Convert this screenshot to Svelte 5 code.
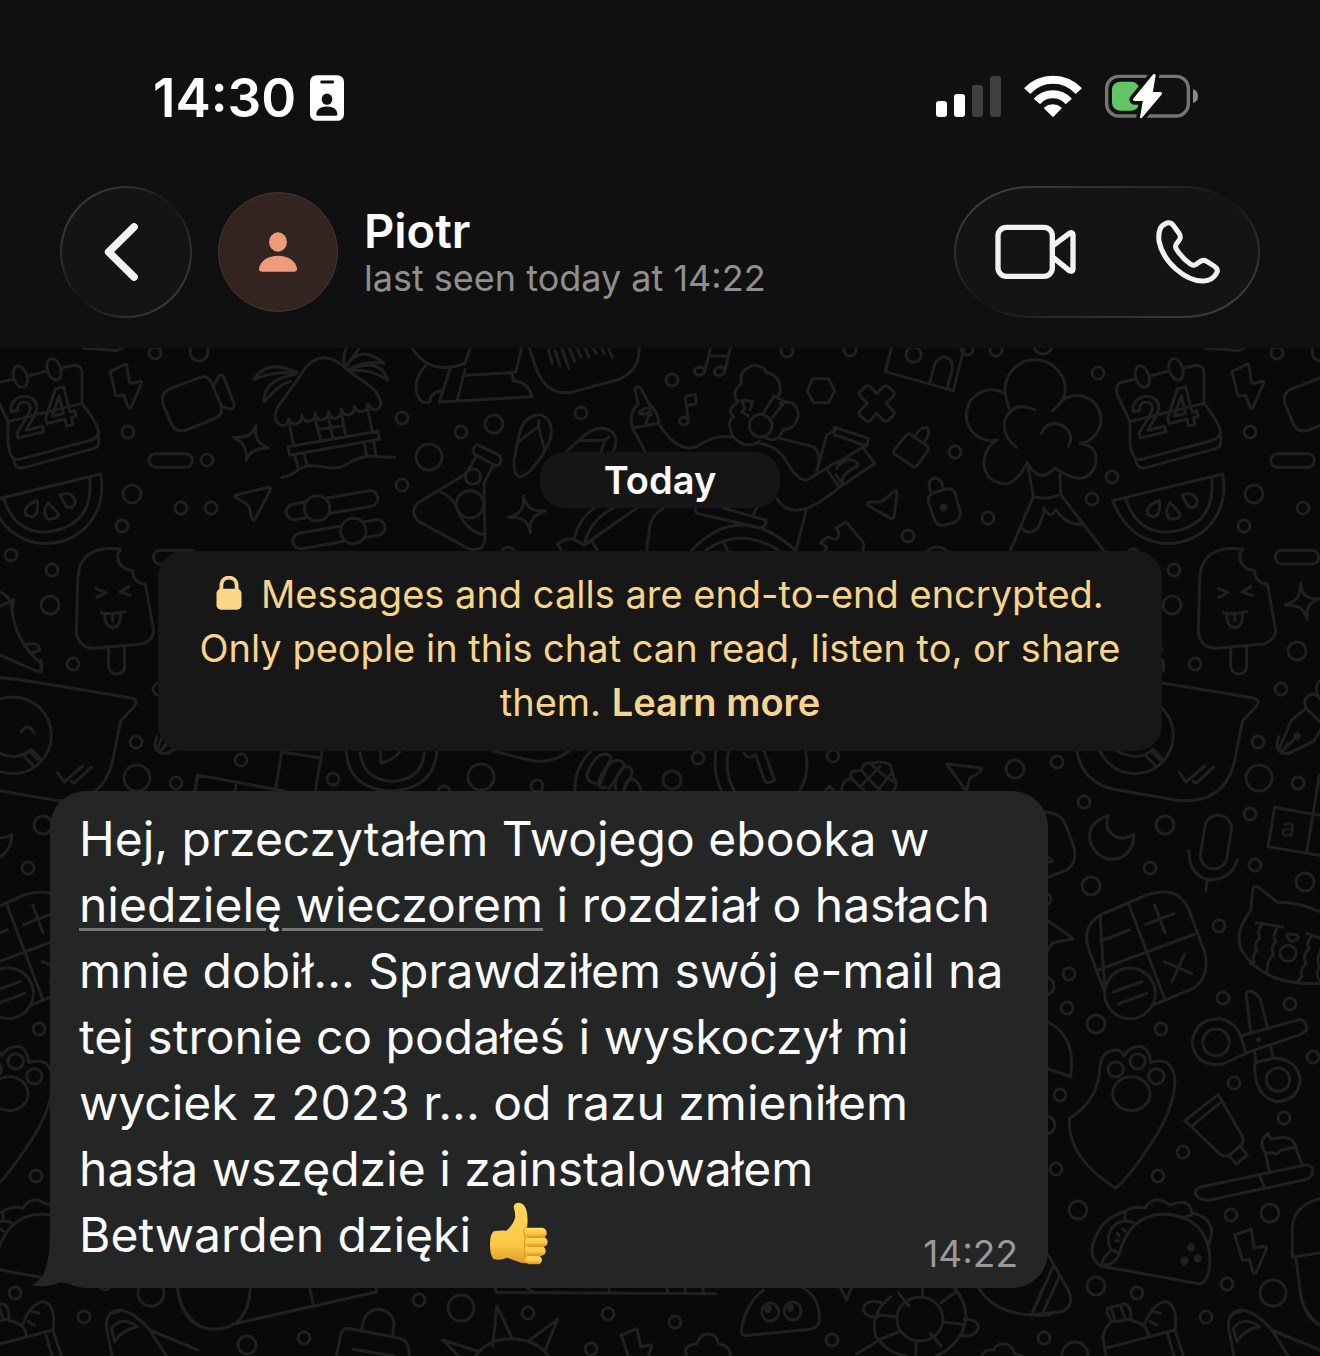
<script>
  const contact = { name: "Piotr", status: "last seen today at 14:22" };

  const small = 6;
  const medium = 9;
  const large = 13;

  // loose bubbles of the wallpaper: radius and list of centers
  const bubbles = [
    {
      r: small,
      at: [
        [155, 353], [128, 432], [207, 460], [181, 508], [211, 508], [122, 526],
        [11, 555], [52, 570], [73, 664], [402, 418], [402, 485], [461, 432],
        [581, 413], [672, 380], [787, 351], [850, 350], [508, 553], [996, 350],
        [1098, 373], [1112, 477], [955, 452], [1092, 499], [988, 518],
        [908, 536], [967, 349], [1057, 762], [1084, 802], [1150, 868],
        [1281, 689], [1258, 742], [1298, 783], [1250, 814], [1255, 865],
        [1219, 926], [1223, 998], [1290, 1004], [1069, 974], [1067, 1008],
        [1045, 899], [1161, 1029], [1060, 1095], [1056, 1169], [1183, 1152],
        [1158, 1176], [1234, 1083], [1313, 1057], [1284, 1118], [1231, 1215],
        [1227, 1284], [1137, 1293], [1206, 1317], [1044, 1338], [241, 760],
        [333, 779], [537, 786], [444, 792], [698, 758], [833, 756],
        [419, 1300], [528, 1313], [608, 1314], [675, 1322], [591, 1349],
        [304, 1338], [832, 1340],
      ],
    },
    {
      r: medium,
      at: [
        [199, 352], [132, 494], [50, 605], [494, 424], [1043, 345],
        [1297, 651], [1165, 825], [1091, 886], [1305, 882], [1045, 986],
        [1096, 1024], [1046, 1125], [1078, 1210], [1270, 1213], [1096, 1286],
        [672, 780], [1015, 769], [247, 1345],
      ],
    },
    {
      r: large,
      at: [
        [429, 457], [937, 560], [1259, 778], [1273, 1293], [1075, 1355],
        [481, 777], [461, 1308],
      ],
    },
  ];
</script>

<div class="screen">
  <header>
    <div class="status-bar">
      <div class="clock">
        <span>14:30</span>
        <svg width="34" height="46" viewBox="810 76 102 137" aria-hidden="true">
          <rect x="810" y="76" width="102" height="137" rx="20" fill="#fff" />
          <rect x="841" y="92" width="41" height="9" rx="4" fill="#101010" />
          <ellipse cx="861" cy="148" rx="16" ry="17" fill="#101010" />
          <path d="M829 193C829 179 842 170 861 170S892 179 892 193Q892 198 886 198H835Q829 198 829 193Z" fill="#101010" />
        </svg>
      </div>
      <div class="indicators">
        <svg width="65" height="41" viewBox="111 78 195 123" aria-label="Signal">
          <rect x="111" y="153" width="33" height="48" rx="9" fill="#fff" />
          <rect x="165" y="132" width="33" height="69" rx="9" fill="#fff" />
          <rect x="219" y="105" width="33" height="96" rx="9" fill="#404040" />
          <rect x="273" y="78" width="33" height="123" rx="9" fill="#404040" />
        </svg>
        <svg width="58" height="43" viewBox="374 75 174 129" aria-label="Wi-Fi">
          <g fill="#fff" stroke="#fff" stroke-width="4" stroke-linejoin="round">
            <path d="M377 115A116 116 0 0 1 545 115L529 129A92 92 0 0 0 393 129Z" />
            <path d="M406 146A75 75 0 0 1 515 146L499 160A52 52 0 0 0 422 160Z" />
            <path d="M436 174A38 38 0 0 1 485 174L461 199Z" />
          </g>
        </svg>
        <svg width="93" height="46" viewBox="615 70 279 138" aria-label="Battery charging">
          <rect x="620" y="80" width="245" height="119" rx="36" fill="none" stroke="#757575" stroke-width="10" />
          <rect x="636" y="96" width="82" height="87" rx="24" fill="#63c466" />
          <path d="M879 119Q894 124 894 139.500Q894 155 879 160Z" fill="#8a8a8a" />
          <g stroke-linejoin="round">
            <path d="M762 76L703 148Q701 151 704 151H732L723 203L782 133Q785 130 781 130H755L764 77Z" fill="#101010" stroke="#101010" stroke-width="28" />
            <path d="M762 76L703 148Q701 151 704 151H732L723 203L782 133Q785 130 781 130H755L764 77Z" fill="#fff" stroke="#fff" stroke-width="6" />
          </g>
        </svg>
      </div>
    </div>

    <div class="nav">
      <button class="glass back" aria-label="Back">
        <svg width="36" height="58" viewBox="190 518 108 174">
          <path d="M283 530L207 605L283 680" fill="none" stroke="#f2f2f2" stroke-width="23" stroke-linecap="round" stroke-linejoin="round" />
        </svg>
      </button>
      <div class="avatar">
        <svg width="38" height="40" viewBox="657 541 114 120" aria-hidden="true">
          <g fill="#ee9b7c">
            <ellipse cx="714" cy="571" rx="27" ry="29" />
            <path d="M657 650C661 628 684 612 714 612S767 628 771 650Q772 660 762 660H666Q656 660 657 650Z" />
          </g>
        </svg>
      </div>
      <div class="contact">
        <h1>{contact.name}</h1>
        <p>{contact.status}</p>
      </div>
      <div class="glass calls">
        <button aria-label="Video call">
          <svg width="82" height="56" viewBox="286 523 246 168">
            <g fill="none" stroke="#f2f2f2" stroke-width="16" stroke-linejoin="round">
              <rect x="295" y="533" width="163" height="147" rx="25" />
              <path d="M460 588L509 551Q520 546 520 556V658Q520 668 509 663L460 623" />
            </g>
          </svg>
        </button>
        <button aria-label="Voice call">
          <svg width="64" height="64" viewBox="769 512 192 192">
            <path d="M785 532C800 517 812 517 820 527L838 552Q845 562 839 572L830 584Q825 592 831 601Q848 627 872 644Q881 650 889 645L901 637Q911 630 921 636L943 650Q957 659 951 671Q938 694 912 695C860 697 790 640 778 575Q775 548 785 532Z" fill="none" stroke="#f2f2f2" stroke-width="15" stroke-linejoin="round" />
          </svg>
        </button>
      </div>
    </div>
  </header>

  <main>
    <svg class="wallpaper" aria-hidden="true">
      <defs>
        <g id="doodles">
          {#each bubbles as group}
            {#each group.at as [x, y]}
              <circle cx={x} cy={y} r={group.r} />
            {/each}
          {/each}

          <!-- beach hut, camera, sparkle, sliders -->
          <g transform="translate(0 340) scale(.33333)">
            <path d="M250 25Q330 30 350 32L370 22M330 95L375 73Q380 70 381 78L388 125Q389 131 395 130L420 124Q427 123 424 132L394 200Q388 210 384 200L371 166L352 167Q348 168 346 160Z" />
            <path d="M505 148L600 112Q622 106 634 126L664 198Q670 222 650 233L560 270Q530 280 516 256L489 192Q482 160 505 148ZM643 133L657 108Q664 100 671 110L702 192Q704 208 690 207L668 200" />
            <rect x="447" y="341" width="130" height="41" rx="20" />
            <rect x="460" y="631" width="130" height="41" rx="20" />
            <path d="M768 256C762 295 775 312 806 324C770 325 750 332 739 361C742 325 730 305 701 292C735 295 755 288 768 256Z" />
            <path d="M706 466L805 442Q815 442 810 452L766 536Q759 545 755 534L748 503Q747 497 740 492L708 473Q702 468 706 466Z" />
            <path d="M892 98Q800 55 762 118Q830 90 890 100M886 103Q790 120 792 186Q840 130 870 125M1035 80Q1025 50 1040 22M1038 80Q1080 10 1152 70Q1100 60 1045 88M1045 90Q1140 50 1163 120Q1110 85 1050 92M1045 70L1078 25" />
            <path d="M868 250L880 314M945 235L962 300M984 225L998 292M1024 215L1036 285M1104 210L1116 270M955 268L1030 257M864 320L1133 274L1138 298L869 346ZM884 345L896 388M912 340L922 378M1093 310L1100 348M1121 305L1128 348M846 412Q875 408 895 388Q930 370 975 382Q1020 390 1055 364Q1090 345 1140 350L1184 352" />
            <path d="M848 181L902 105C938 40 995 40 1040 88L1118 145Q1143 170 1142 195Q1135 215 1118 208Q1108 200 1102 192Q1105 210 1090 214Q1070 218 1063 198Q1065 222 1045 226Q1028 225 1024 206Q1025 230 1008 235Q990 238 985 214Q985 236 965 240Q948 240 945 220Q948 240 928 244Q910 245 906 226Q906 248 888 252Q872 252 866 236Q865 256 846 257Q825 250 825 225Q830 200 848 181Z" fill="#090909" />
            <rect x="857" y="472" width="278" height="47" rx="23" transform="rotate(-10 996 495)" />
            <rect x="877" y="559" width="280" height="47" rx="23" transform="rotate(-10 1017 582)" />
            <circle cx="951" cy="505" r="38" fill="#090909" />
            <circle cx="1060" cy="573" r="38" fill="#090909" />
          </g>

          <!-- chair, flip flops, flask, singer with headphones -->
          <g transform="translate(400 340) scale(.33333)">
            <path d="M36 24Q90 110 195 70L211 24M78 75Q45 110 48 150Q60 200 90 185Q92 155 125 153M150 88L118 186L396 170Q385 125 340 122L336 98L196 106M172 180L195 88M336 98L347 96L365 24" />
            <path d="M388 24L410 90Q440 165 510 158L650 120Q720 95 717 24M445 30L457 70M466 32L480 78M486 28L507 86M508 26L524 64M532 26L543 52M555 24L567 52M580 24L588 40M605 24L613 42M625 24L637 52" />
            <path d="M885 100Q878 85 900 80Q920 82 912 100Q895 112 885 100ZM915 92L931 24M931 48L984 48M944 100Q940 82 962 80Q980 84 972 100Q955 114 944 100ZM975 92L991 24M838 246Q838 232 855 232Q868 236 864 250Q848 262 838 246ZM865 246L856 172Q858 166 886 164L889 190L860 198" />
            <path d="M342 360L356 290Q370 220 425 225Q465 245 450 300L430 340Q385 410 358 410Q340 405 342 360ZM356 305L415 260L417 242M415 260L435 332M500 334L560 280Q610 250 640 280Q655 300 640 334M540 302L615 300L628 290M615 300L603 334" />
            <path d="M228 350L197 402L52 490Q30 515 52 542L205 626Q250 636 255 600L252 430L280 375M120 455Q160 470 175 515Q200 575 252 584" />
            <path d="M232 314L298 346Q308 360 298 374Q288 380 278 372L222 342Q212 325 232 314Z" />
            <circle cx="219" cy="410" r="23" fill="#090909" />
            <circle cx="210" cy="493" r="41" fill="#090909" />
            <path d="M370 468C378 500 395 516 436 513C400 525 388 540 391 578C385 545 370 530 326 532C360 522 375 505 370 468Z" />
            <path d="M735 334L698 264Q685 215 715 192L705 150Q710 130 724 148L748 192Q776 215 776 250Q830 340 890 320Q945 280 1000 292M698 264L776 250M718 220Q730 200 755 205Q745 225 720 222M738 250L745 228L755 222" />
            <path d="M1000 292Q985 260 990 240L1002 232Q985 215 995 202L1015 185Q990 160 1025 130Q1015 90 1060 76Q1095 80 1100 98Q1145 105 1140 160L1130 172M1140 190Q1190 175 1195 225Q1185 270 1150 268Q1130 320 1085 285M1000 292Q1040 330 1078 305M1088 222L1122 168L1155 185L1118 232M1025 182L1035 205L1025 215L1045 228M1030 180L1058 185L1050 210M1080 310Q1140 320 1165 375Q1205 435 1230 415L1310 365M1140 295L1240 320Q1265 335 1252 388" />
            <circle cx="1082" cy="257" r="34" fill="#090909" />
            <path d="M1238 116L1286 116L1304 152L1286 188L1240 188L1222 152ZM1250 395L1280 285L1305 272M1304 262L1405 295L1400 318L1302 284ZM1310 385Q1320 365 1345 360M1282 390L1318 442L1425 370L1388 322L1310 370M1308 405L1325 430Q1325 400 1370 380Q1385 365 1345 358M1318 442Q1180 560 1130 475M885 504Q885 520 900 522L1080 564Q1100 560 1098 540L970 505M1060 525L1070 504M1188 630L1218 512M740 630L750 555Q760 520 790 506M876 630Q1020 480 1185 630M918 630Q1020 560 1135 630M970 605L982 630M522 595Q540 530 585 504M552 615Q570 540 640 504M552 615L710 504M472 612Q500 590 525 600L552 615L575 602L592 630M472 612L484 630" />
            <path d="M1262 607L1285 590Q1310 605 1315 590Q1320 575 1308 565L1338 546L1385 600Q1395 615 1388 630M1262 607L1280 622L1275 630" />
          </g>

          <!-- tree on a volcano, calendar, watermelon, ice lolly -->
          <g transform="translate(820 340) scale(.33333)">
            <path d="M214 24L196 95L400 152L432 24M330 125L345 70Q365 38 392 60Q398 70 396 90L382 142" />
            <circle cx="281" cy="44" r="23" />
            <path d="M120 155L138 138Q146 134 152 142L170 160L188 142Q196 134 204 140L220 154Q226 160 220 168L198 190L220 212Q226 220 220 226L204 242Q196 246 188 240L170 220L152 240Q146 246 138 242L120 226Q114 220 120 212L142 190L120 168Q114 160 120 155Z" />
            <path d="M270 282L322 318Q328 328 322 335L290 378Q284 384 276 378L224 342Q218 335 224 328L260 284Q265 280 270 282ZM286 288Q300 258 322 264Q335 280 310 308" />
            <path d="M144 490Q142 486 150 486L180 486Q190 484 196 476L222 454Q230 448 231 460L222 530Q216 540 208 533L150 500Q142 496 144 490ZM345 458L375 448Q398 442 406 460L420 515Q424 540 400 548L372 556Q350 558 344 540L326 490Q318 468 345 458ZM332 455Q318 420 345 414Q365 415 370 446" />
            <circle cx="371" cy="502" r="7" fill="#202020" />
            <path d="M568 205Q558 180 556 160A90 90 0 1 1 734 165Q725 190 698 212Q715 195 732 178A72 72 0 1 1 780 310Q840 320 826 375Q800 450 704 384Q660 435 622 368Q590 430 555 432Q490 425 492 360Q500 315 532 300A76 76 0 1 1 556 162M646 210Q580 180 555 240Q545 290 590 322M664 280Q680 240 725 255Q765 280 746 318M622 368L640 470Q680 480 722 464L720 400M640 470L572 630M722 464L850 630M605 565Q630 590 655 562Q670 530 672 505Q690 540 707 508Q735 555 788 554" />
            <path d="M945 118L900 128Q885 140 892 165L930 245M990 108L1042 94M1090 84L1130 76Q1150 78 1152 95V190M930 245L1152 190Q1200 250 1202 280V310Q1202 320 1190 325L970 385Q950 385 945 355Q930 335 930 300ZM945 355Q960 362 975 355L1180 300Q1198 294 1200 280" />
            <ellipse cx="967" cy="110" rx="20" ry="33" transform="rotate(-18 967 110)" />
            <ellipse cx="1068" cy="88" rx="20" ry="33" transform="rotate(-18 1068 88)" />
            <text x="950" y="297" transform="rotate(-14 950 297)">24</text>
            <path d="M878 482L1208 402Q1225 500 1160 565Q1100 620 1015 608Q920 590 878 482ZM915 472Q950 580 1045 576Q1190 560 1175 412M985 525Q970 500 1018 482Q1022 530 1000 530ZM1050 488Q1030 520 1050 538Q1090 535 1078 518ZM1086 465Q1120 450 1133 485Q1125 510 1105 500Z" />
            <path d="M1235 95L1283 72Q1287 70 1288 80L1293 125L1325 123Q1332 125 1328 134L1298 200Q1293 210 1288 200L1278 166L1258 167Q1254 168 1252 160Z" opacity="0" />
            <path d="M1268 628Q1180 615 1150 670Q1138 690 1138 760L1135 880Q1145 925 1190 925L1330 912Q1370 900 1366 865L1342 732Q1305 730 1304 692Q1255 685 1260 640ZM1232 922V980Q1238 1002 1256 1002Q1280 1000 1280 980V920M1195 746L1224 758L1196 772M1292 740L1266 756L1297 766M1210 818Q1245 825 1280 815M1220 822Q1220 862 1245 863Q1268 862 1268 820M1244 825V842" />
            <path d="M1442 730C1445 765 1458 778 1500 776C1470 785 1458 800 1462 838C1450 805 1440 796 1396 794C1430 785 1440 770 1442 730Z" />
          </g>
          <path d="M-2 591Q12 596 12 610Q15 640 40 663Q44 673 36 671L0 655M12 610L14 600L0 606M24 646Q38 640 40 650L30 654" />

          <!-- smiley sticker, moon, microphone, calculator, cat -->
          <g transform="translate(1030 660) scale(.33333)">
            <path d="M-190 140Q-140 60 -40 45L120 50Q250 45 380 66L670 114Q692 120 680 138L638 182L612 310Q580 430 450 422L250 388Q155 365 140 270" />
            <circle cx="315" cy="226" r="115" />
            <path d="M258 270Q320 310 370 268L400 300M350 290L375 316M365 275L390 300M218 215Q230 185 250 210M340 215Q360 185 378 218M448 338L468 366L524 318M490 364L498 370L550 322M398 0Q405 25 398 35" />
            <path d="M828 145L785 180L750 260Q745 285 775 280L850 245L875 205M828 145Q815 115 845 102Q865 105 868 115M828 145L880 195M868 115Q845 75 880 55M755 275L800 230" />
            <circle cx="801" cy="229" r="7" />
            <path d="M236 466Q165 490 182 550Q210 610 270 594Q310 575 312 524Q260 550 235 510Q225 485 236 466Z" />
            <rect x="518" y="465" width="80" height="162" rx="40" transform="rotate(9 558 545)" />
            <path d="M477 572Q475 650 545 660Q605 655 622 600M532 660L527 694" />
            <path d="M734 442L714 560L880 588M734 442L880 468M868 345L830 578" />
            <path d="M0 455L48 456Q90 460 105 490L130 555Q145 605 110 630L54 652M54 590L68 603L54 608M54 782L130 836L68 848L54 870" />
            <path d="M210 765L350 705Q440 675 475 745L525 880Q540 950 490 985L370 1035M225 1000L175 865Q155 800 210 765ZM297 735L405 1020M205 930L495 822M212 843L298 810M347 794L432 761M374 735L405 818M403 905L485 941M464 882L426 965" />
            <circle cx="300" cy="1000" r="76" fill="#090909" />
            <path d="M250 996L336 965M265 1032L350 1000" />
            <path d="M870 755Q800 725 742 727L690 685Q672 670 668 690L662 752Q610 820 635 870Q700 980 870 970M678 788L758 801M830 820L872 835M693 795Q680 820 690 835Q670 850 680 870Q665 890 672 905L662 912M742 803Q725 830 738 845Q720 860 730 885Q708 905 712 940M845 830Q825 850 838 865Q815 885 828 910Q808 930 815 950L802 965M872 870Q858 900 868 920Q855 945 868 960M770 822Q805 820 805 835L785 845Q770 835 770 822Z" />
            <circle cx="774" cy="880" r="24" />
            <text class="tile" x="750" y="526" transform="rotate(9 750 526)">a</text>
          </g>

          <!-- paw, scissors, toothpaste, taco, lunch bag -->
          <g transform="translate(1030 1000) scale(.33333)">
            <path d="M54 66Q140 110 122 230L54 207M118 355Q205 305 210 200Q215 150 260 150Q278 155 282 168Q300 135 335 140Q360 150 362 188Q430 165 435 245Q430 340 350 450Q290 540 256 564Q110 470 118 355Z" />
            <circle cx="257" cy="208" r="23" />
            <circle cx="323" cy="184" r="23" />
            <circle cx="379" cy="229" r="23" />
            <ellipse cx="304" cy="281" rx="56" ry="51" />
            <path d="M632 108L810 58Q835 65 828 92L810 104L645 160M632 108L648 160L580 192Q500 205 486 130Q495 55 570 56Q615 65 632 108ZM648 -20Q660 -40 690 -5L712 80M648 -20L662 94M674 155L678 188L730 174Q800 175 811 240Q805 300 740 305Q675 290 674 200V188M722 138L730 174" />
            <circle cx="558" cy="127" r="40" />
            <circle cx="744" cy="239" r="35" />
            <circle cx="686" cy="119" r="3" />
            <path d="M565 284L464 362L570 462Q580 472 598 466L630 438Q642 428 638 410ZM574 305L486 378M598 466L630 438L652 465L618 492ZM510 562L830 494Q855 500 845 525Q840 535 830 538L540 600Q495 600 496 575Q498 565 510 562ZM690 528L702 560M718 515L706 460Q690 430 700 415L714 400Q718 420 740 415Q790 405 796 440L815 492M706 460L725 458L738 462L755 450L800 440" />
            <path d="M212 798Q170 770 195 715Q220 650 285 635Q310 615 345 625Q370 580 420 615Q480 590 485 640Q545 650 545 700L536 735M212 798L510 852Q535 845 540 790Q540 650 400 642Q300 645 268 760Q265 780 235 795Q205 795 225 770L245 750M285 635V662L310 668Q250 650 235 710Q235 740 245 750L268 760M460 652L485 645M262 700L268 708M278 688L286 694M258 722L266 722" />
            <g fill="#202020">
              <circle cx="483" cy="742" r="8" />
              <circle cx="463" cy="783" r="8" />
              <circle cx="503" cy="776" r="8" />
            </g>
            <path d="M614 705L664 687L672 745L705 738Q713 740 708 750L680 815Q674 826 668 815L658 778L638 782ZM870 595Q780 620 787 700V772L870 758M798 772L810 870Q820 940 870 975" />
            <path d="M54 765L115 870Q135 920 95 935L0 945M70 798L5 945M90 825L38 940" />
            <path d="M228 1068L218 1010Q225 980 245 965Q220 925 240 922L285 912Q305 920 302 950L305 962Q350 970 355 1005M225 1045L435 990L460 1068M412 998L432 1068M345 970Q370 905 410 905Q445 920 435 990M360 965L380 975M372 935L392 940M245 930L255 962M272 920L285 955M245 965L302 958M612 1068L595 980Q595 930 640 930Q690 945 725 990L775 1068M725 990L870 1050M620 1025L610 985Q640 945 688 980Q640 990 620 1025ZM600 950Q605 938 630 935" />
          </g>

          <!-- pancake, shell, clock, raspberry -->
          <g transform="translate(150 730) scale(.574 .33333)">
            <path d="M12 20Q0 70 30 70L38 62M20 60L28 40M78 183L84 136L235 183M150 162L148 183M230 63L218 183M300 63L288 183M230 66L298 84M342 63Q345 175 420 184Q495 175 500 63M366 63Q370 150 422 154Q475 150 478 63M402 63V99Q425 92 436 63M598 63L660 90Q700 105 730 63M740 183Q740 110 768 63M778 160Q760 160 762 130Q775 70 795 72Q808 80 800 95L785 160M795 172Q775 180 785 140Q800 85 818 92Q830 100 825 112L800 175M812 180Q805 150 825 112Q840 105 840 130L825 183M826 183Q828 145 842 148Q852 155 855 183M986 63Q980 130 996 183M1008 63Q1000 130 1018 183M1142 63Q1150 130 1132 183M1035 68Q1038 85 1048 80L1055 74L1070 150Q1075 165 1088 150L1070 63M1176 183L1184 168L1192 183M1205 183Q1205 150 1222 145Q1215 120 1240 122Q1240 95 1260 100Q1275 90 1290 105L1295 140Q1305 160 1295 183M1222 145L1245 183M1240 122L1272 183M1255 100Q1270 130 1300 160M1272 110L1240 165M1292 130L1268 180M1388 102L1448 114Q1455 118 1428 145L1422 183L1388 102" />
          </g>

          <!-- bag, sun, ghost, turtle -->
          <g transform="translate(100 1270) scale(.606 .33333)">
            <path d="M128 54Q135 175 190 178Q245 175 248 54M220 162L456 66V54M346 54L352 104M652 54L654 67L1016 71M705 54L715 66M840 54V68M935 54L938 69M966 54V69M995 54V69M432 178Q435 120 460 118Q485 125 485 165L483 195M390 258L398 190Q402 170 418 178L495 205Q512 215 510 258M418 238L485 258M620 258Q640 205 680 206Q720 208 740 258M625 245L566 210L592 258M648 228L655 108L680 205M708 212L755 148L735 240M872 258L860 195L886 176L892 230L911 225L905 258M968 258Q960 225 985 222Q990 190 1005 192Q1020 195 1020 222Q1040 225 1040 258M1455 258Q1460 235 1475 240Q1480 218 1495 222Q1510 235 1508 250L1522 258" />
            <path d="M1095 60Q1065 100 1058 185Q1060 200 1070 196L1172 178Q1188 170 1187 150Q1188 80 1160 54M1222 54L1232 90L1240 54M1305 80Q1270 130 1280 200Q1300 250 1330 258M1410 54Q1440 120 1422 190Q1405 240 1380 258M1318 70L1335 108M1412 66L1388 98M1284 134L1315 140M1392 156L1424 163M1285 210L1320 184M1370 190L1388 228M1347 216L1346 258M1357 54L1358 80M1290 98Q1260 85 1260 120Q1265 145 1284 140M1426 148Q1455 150 1448 180Q1440 205 1418 195M1284 212L1248 252M1450 54Q1480 145 1568 135M1538 130L1556 54" />
            <ellipse cx="1106" cy="126" rx="14" ry="27" />
            <ellipse cx="1143" cy="123" rx="14" ry="27" />
            <ellipse cx="1353" cy="147" rx="38" ry="66" />
            <ellipse cx="1102" cy="117" rx="4" ry="8" fill="#202020" />
            <ellipse cx="1139" cy="113" rx="4" ry="8" fill="#202020" />
          </g>
        </g>
      </defs>
      <g transform="translate(0 -348)">
        <use href="#doodles" x="-1122" />
        <use href="#doodles" />
        <use href="#doodles" x="1122" />
      </g>
    </svg>

    <div class="day">Today</div>

    <p class="notice">
      <svg width="26" height="34" viewBox="644 712 74 98" aria-hidden="true">
        <rect x="645" y="749" width="72" height="60" rx="13" fill="#f9d68a" />
        <path d="M659 754V740C659 709 703 709 703 740V754" fill="none" stroke="#f9d68a" stroke-width="11" />
      </svg>
      Messages and calls are end-to-end encrypted. Only people in this chat can
      read, listen to, or share them. <a href="#learn">Learn more</a>
    </p>

    <article class="message">
      <svg class="tail" width="40" height="60" viewBox="0 0 40 60" aria-hidden="true">
        <path d="M18 0C18 34 14 50 0 57C8 60 22 58 30 53L40 56V0Z" fill="#242626" />
      </svg>
      <p>
        Hej, przeczytałem Twojego ebooka w
        <a href="#date">niedzielę wieczorem</a> i rozdział o hasłach mnie
        dobił... Sprawdziłem swój e-mail na tej stronie co podałeś i wyskoczył mi
        wyciek z 2023 r... od razu zmieniłem hasła wszędzie i zainstalowałem
        Betwarden dzięki
        <svg class="thumb" width="60" height="64" viewBox="52 36 180 192" role="img" aria-label="thumbs up">
          <defs>
            <linearGradient id="skin" x1="0" y1="0" x2="0" y2="1">
              <stop offset="0" stop-color="#ffd75c" />
              <stop offset=".7" stop-color="#fbc845" />
              <stop offset="1" stop-color="#e09a2c" />
            </linearGradient>
            <linearGradient id="finger" x1="0" y1="0" x2="0" y2="1">
              <stop offset="0" stop-color="#ffdc62" />
              <stop offset=".6" stop-color="#fbc643" />
              <stop offset="1" stop-color="#d98f26" />
            </linearGradient>
          </defs>
          <path d="M66 124Q88 120 104 122Q126 104 131 80Q130 64 126 50Q128 38 142 38Q160 40 165 64Q170 90 166 112L185 130V214Q160 226 136 214Q118 208 106 203Q84 214 64 206Q54 190 55 160Q56 132 66 124Z" fill="url(#skin)" />
          <g fill="url(#finger)">
            <rect x="161" y="197" width="50" height="26" rx="13" />
            <rect x="158" y="168" width="64" height="30" rx="15" />
            <rect x="158" y="141" width="70" height="30" rx="15" />
            <rect x="156" y="113" width="69" height="31" rx="15" />
          </g>
          <path d="M164 110Q152 116 158 134Q164 142 158 156Q160 184 160 202" fill="none" stroke="#dc9428" stroke-width="3" stroke-linecap="round" />
        </svg>
      </p>
      <time>14:22</time>
    </article>
  </main>
</div>

<style>
  :global(body) {
    margin: 0;
    background: #090909;
  }

  .screen {
    min-height: 100vh;
    display: flex;
    flex-direction: column;
    font-family: Inter, "Noto Sans", sans-serif;
    color: #fafafa;
  }

  h1,
  p {
    margin: 0;
  }

  svg {
    flex: none;
  }

  button {
    display: flex;
    align-items: center;
    justify-content: center;
    padding: 0;
    border: 0;
    background: none;
    cursor: pointer;
  }

  header {
    padding: 64px 60px 30px;
    background: #101010;
  }

  .status-bar {
    display: flex;
    justify-content: space-between;
    align-items: center;
    height: 66px;
    padding: 0 62px 0 93px;
    margin-bottom: 56px;
  }

  .clock {
    display: flex;
    align-items: center;
    gap: 14px;
    padding-top: 2px;
    color: #fff;
    font-size: 53px;
    font-weight: 600;
    line-height: 66px;
  }

  .indicators {
    display: flex;
    align-items: center;
    gap: 23px;
    padding-bottom: 2px;
  }

  .nav {
    display: flex;
    align-items: center;
    gap: 26px;
  }

  .glass {
    box-sizing: border-box;
    height: 132px;
    border: 2px solid transparent;
    background:
      linear-gradient(#141414, #141414) padding-box,
      linear-gradient(to bottom right, #444, #2c2c2c 30%, #141414 50%, #2c2c2c 70%, #444) border-box;
  }

  .back {
    width: 132px;
    border-radius: 50%;
    padding-right: 10px;
  }

  .avatar {
    box-sizing: border-box;
    display: flex;
    align-items: center;
    justify-content: center;
    width: 120px;
    height: 120px;
    border: 1px solid #443733;
    border-radius: 50%;
    background: #332420;
  }

  .contact {
    flex: 1;
    padding-top: 2px;
  }

  h1 {
    font-size: 47px;
    font-weight: 600;
    line-height: 50px;
  }

  .contact p {
    color: #8f8f8f;
    font-size: 36px;
    line-height: 44px;
  }

  .calls {
    display: flex;
    align-items: center;
    justify-content: space-between;
    width: 306px;
    padding: 0 38px 0 39px;
    border-radius: 76px / 66px;
  }

  main {
    position: relative;
    flex: 1;
    padding: 104px 0 68px;
    overflow: hidden;
    background: #090909;
  }

  .wallpaper {
    position: absolute;
    inset: 0;
    width: 100%;
    height: 100%;
    fill: none;
    stroke: #202020;
    stroke-width: 3px;
    stroke-linecap: round;
    stroke-linejoin: round;
  }

  .wallpaper * {
    vector-effect: non-scaling-stroke;
  }

  .wallpaper text {
    font-size: 160px;
    font-weight: 600;
  }

  .wallpaper .tile {
    fill: #202020;
    stroke: none;
    font-size: 76px;
    font-weight: 400;
  }

  .day {
    position: relative;
    width: 240px;
    margin: 0 auto 43px;
    border-radius: 25px;
    background: #161616;
    font-size: 38px;
    font-weight: 600;
    line-height: 56px;
    text-align: center;
  }

  .notice {
    position: relative;
    margin: 0 158px 40px;
    padding: 16px 24px 22px;
    border-radius: 26px;
    background: #171717;
    color: #f7d48c;
    font-size: 38px;
    line-height: 54px;
    text-align: center;
  }

  .notice svg {
    margin-right: 8px;
    vertical-align: -2px;
  }

  .notice a {
    color: inherit;
    font-weight: 600;
    text-decoration: none;
  }

  .message {
    position: relative;
    margin: 0 272px 0 50px;
    padding: 15px 29px 20px;
    border-radius: 36px;
    background: #242626;
  }

  .message p {
    font-size: 48px;
    line-height: 66px;
  }

  .message a {
    color: inherit;
    text-decoration: underline #777 3px;
    text-underline-offset: 6px;
  }

  .tail {
    position: absolute;
    left: -18px;
    bottom: 0;
  }

  .thumb {
    margin-left: 4px;
    vertical-align: -14px;
  }

  time {
    position: absolute;
    right: 30px;
    bottom: 12px;
    color: #999;
    font-size: 37px;
    line-height: 44px;
  }
</style>
